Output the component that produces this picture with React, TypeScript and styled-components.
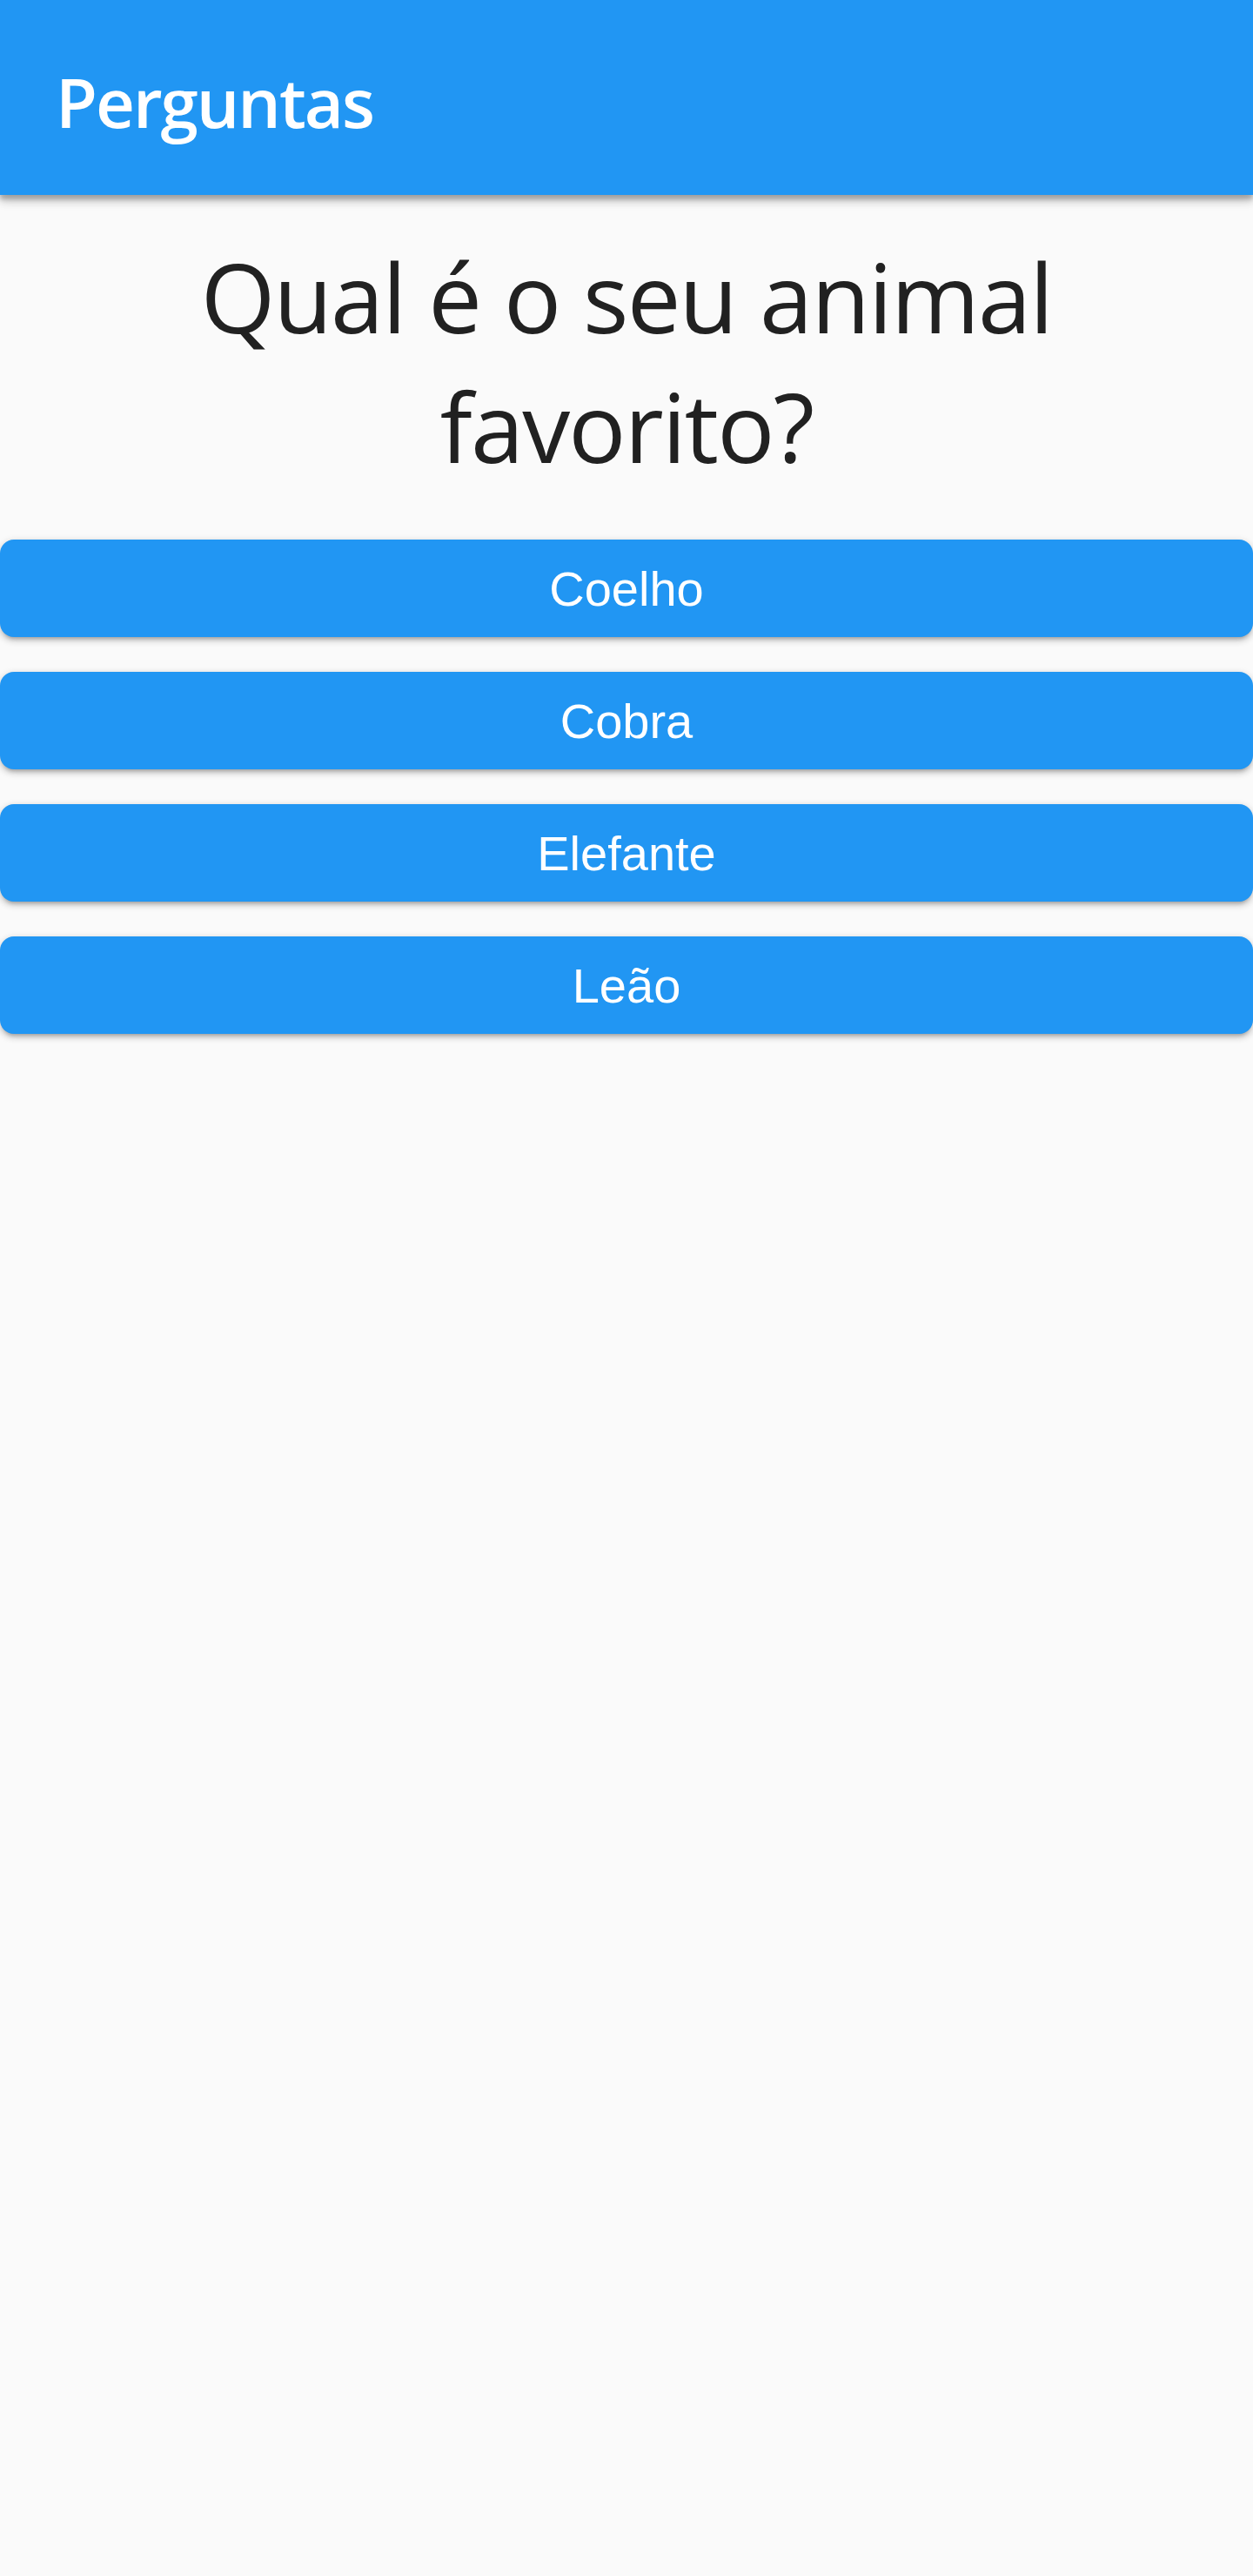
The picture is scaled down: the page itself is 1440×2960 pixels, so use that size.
import React from "react";
import styled, { createGlobalStyle } from "styled-components";

const Global = createGlobalStyle`
  html, body {
    margin: 0;
    padding: 0;
    background: #fafafa;
  }
  #root {
    min-height: 2960px;
    background: #fafafa;
  }
`;

const Page = styled.div`
  display: flex;
  flex-direction: column;
  min-height: 2960px;
  background: #fafafa;
`;

const AppBar = styled.header`
  height: 224px;
  box-sizing: border-box;
  background: #2196f3;
  display: flex;
  align-items: center;
  padding: 10px 64px 0;
  box-shadow: 0 8px 10px rgba(0, 0, 0, 0.14), 0 3px 14px rgba(0, 0, 0, 0.12),
    0 5px 5px rgba(0, 0, 0, 0.2);
  position: relative;
  z-index: 1;
`;

const Title = styled.h1`
  margin: 0;
  color: #ffffff;
  font-family: "Open Sans", "Noto Sans", sans-serif;
  font-weight: 600;
  font-size: 78px;
  letter-spacing: -2px;
  line-height: 1;
`;

const Question = styled.h2`
  margin: 0;
  padding: 42px 40px 56px;
  text-align: center;
  color: #212121;
  font-family: "Open Sans", "Noto Sans", sans-serif;
  font-weight: 400;
  font-size: 110px;
  letter-spacing: -1.8px;
  line-height: 149px;
`;

const Answers = styled.div`
  display: flex;
  flex-direction: column;
  gap: 40px;
`;

const AnswerButton = styled.button`
  height: 112px;
  width: 100%;
  border: none;
  border-radius: 16px;
  background: #2196f3;
  color: #ffffff;
  font-family: "Liberation Sans", Arial, sans-serif;
  font-size: 56px;
  padding: 0;
  cursor: pointer;
  box-shadow: 0 6px 4px -4px rgba(0, 0, 0, 0.2), 0 4px 8px rgba(0, 0, 0, 0.14),
    0 2px 10px rgba(0, 0, 0, 0.12);
`;

const answers = ["Coelho", "Cobra", "Elefante", "Leão"];

export default function App() {
  return (
    <>
      <Global />
      <Page>
        <AppBar>
          <Title>Perguntas</Title>
        </AppBar>
        <Question>Qual é o seu animal favorito?</Question>
        <Answers>
          {answers.map((a) => (
            <AnswerButton key={a}>{a}</AnswerButton>
          ))}
        </Answers>
      </Page>
    </>
  );
}
